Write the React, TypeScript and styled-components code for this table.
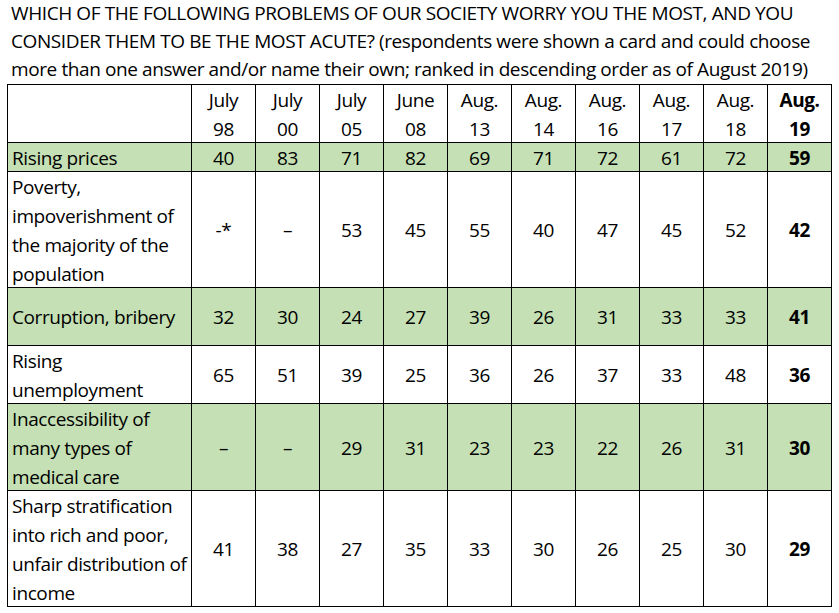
import React from 'react';
import styled, { createGlobalStyle } from 'styled-components';

const GlobalStyle = createGlobalStyle`
  body {
    margin: 0;
    background: #fff;
    color: #000;
    font-family: "Open Sans", "Noto Sans", sans-serif;
  }
`;

const GREEN = '#c5e0b4';

type Row = {
  label: string[];
  values: string[];
  green: boolean;
  height: number;
};

const headers: [string, string][] = [
  ['July', '98'],
  ['July', '00'],
  ['July', '05'],
  ['June', '08'],
  ['Aug.', '13'],
  ['Aug.', '14'],
  ['Aug.', '16'],
  ['Aug.', '17'],
  ['Aug.', '18'],
  ['Aug.', '19'],
];

const rows: Row[] = [
  {
    label: ['Rising prices'],
    values: ['40', '83', '71', '82', '69', '71', '72', '61', '72', '59'],
    green: true,
    height: 28,
  },
  {
    label: ['Poverty,', 'impoverishment of', 'the majority of the', 'population'],
    values: ['-*', '–', '53', '45', '55', '40', '47', '45', '52', '42'],
    green: false,
    height: 115,
  },
  {
    label: ['Corruption, bribery'],
    values: ['32', '30', '24', '27', '39', '26', '31', '33', '33', '41'],
    green: true,
    height: 57,
  },
  {
    label: ['Rising', 'unemployment'],
    values: ['65', '51', '39', '25', '36', '26', '37', '33', '48', '36'],
    green: false,
    height: 57,
  },
  {
    label: ['Inaccessibility of', 'many types of', 'medical care'],
    values: ['–', '–', '29', '31', '23', '23', '22', '26', '31', '30'],
    green: true,
    height: 86,
  },
  {
    label: ['Sharp stratification', 'into rich and poor,', 'unfair distribution of', 'income'],
    values: ['41', '38', '27', '35', '33', '30', '26', '25', '30', '29'],
    green: false,
    height: 115,
  },
];

const Page = styled.div`
  width: 839px;
  height: 613px;
  overflow: hidden;
`;

const Title = styled.div`
  padding-left: 11px;
  margin-top: -1px;
  margin-bottom: 1px;
  font-size: 19px;
  letter-spacing: -0.4px;
  line-height: 28px;
`;

const TitleLine = styled.div`
  white-space: nowrap;
`;

const Grid = styled.div<{ $rows: string }>`
  display: grid;
  grid-template-columns: 183px repeat(10, 63px);
  grid-template-rows: ${(p) => p.$rows};
  gap: 1px;
  padding: 1px;
  margin-left: 7px;
  width: max-content;
  background: #000;
  font-size: 19px;
  letter-spacing: -0.4px;
  line-height: 29px;
`;

const Cell = styled.div<{ $green?: boolean }>`
  display: flex;
  flex-direction: column;
  justify-content: center;
  padding-top: 2px;
  background: ${(p) => (p.$green ? GREEN : '#fff')};
  white-space: nowrap;
  overflow: visible;
`;

const LabelCell = styled(Cell)`
  padding-left: 4px;
  align-items: flex-start;
`;

const ValueCell = styled(Cell)<{ $bold?: boolean }>`
  align-items: center;
  font-weight: ${(p) => (p.$bold ? 700 : 400)};
`;

const HeaderCell = styled(ValueCell)`
  padding-top: 3px;
`;

export default function App() {
  const template = ['57px', ...rows.map((r) => `${r.height}px`)].join(' ');
  return (
    <>
      <GlobalStyle />
      <Page>
        <Title>
          <TitleLine>WHICH OF THE FOLLOWING PROBLEMS OF OUR SOCIETY WORRY YOU THE MOST, AND YOU</TitleLine>
          <TitleLine>
            CONSIDER THEM TO BE THE MOST ACUTE? (respondents were shown a card and could choose
          </TitleLine>
          <TitleLine>
            more than one answer and/or name their own; ranked in descending order as of August 2019)
          </TitleLine>
        </Title>
        <Grid $rows={template}>
          <LabelCell />
          {headers.map(([month, year], i) => (
            <HeaderCell key={i} $bold={i === headers.length - 1}>
              <span>{month}</span>
              <span>{year}</span>
            </HeaderCell>
          ))}
          {rows.map((row) => (
            <React.Fragment key={row.label.join(' ')}>
              <LabelCell $green={row.green}>
                {row.label.map((line) => (
                  <span key={line}>{line}</span>
                ))}
              </LabelCell>
              {row.values.map((v, i) => (
                <ValueCell key={i} $green={row.green} $bold={i === row.values.length - 1}>
                  {v}
                </ValueCell>
              ))}
            </React.Fragment>
          ))}
        </Grid>
      </Page>
    </>
  );
}
